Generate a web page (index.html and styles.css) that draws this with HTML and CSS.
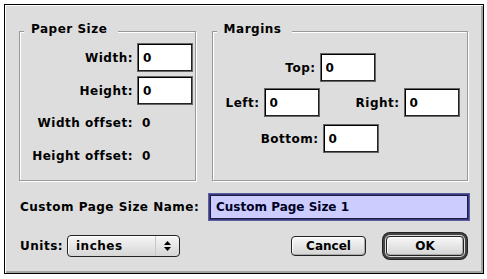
FILE: index.html
```html
<!DOCTYPE html>
<html lang="en">
    <head>
        <meta charset="UTF-8">
        <title>Page Setup</title>
        <link rel="stylesheet" href="styles.css">
    </head>
    <body>
        <div class="dialog">
            <div class="groups">
                <fieldset class="group paper">
                    <legend>Paper Size</legend>
                    <div class="paper-grid">
                        <label class="lbl">Width:</label>
                        <input class="field" type="text" value="0">
                        <label class="lbl">Height:</label>
                        <input class="field" type="text" value="0">
                        <span class="lbl">Width offset:</span>
                        <span class="value">0</span>
                        <span class="lbl">Height offset:</span>
                        <span class="value">0</span>
                    </div>
                </fieldset>
                <fieldset class="group margins">
                    <legend>Margins</legend>
                    <div class="mrow">
                        <label class="lbl top">Top:</label>
                        <input class="field" type="text" value="0">
                    </div>
                    <div class="mrow">
                        <label class="lbl left">Left:</label>
                        <input class="field" type="text" value="0">
                        <label class="lbl right">Right:</label>
                        <input class="field" type="text" value="0">
                    </div>
                    <div class="mrow">
                        <label class="lbl bottom">Bottom:</label>
                        <input class="field" type="text" value="0">
                    </div>
                </fieldset>
            </div>
            <div class="name-row">
                <label class="name-lbl">Custom Page Size Name:</label>
                <input class="name-field" type="text" value="Custom Page Size 1">
            </div>
            <div class="units-row">
                <label class="units-lbl">Units:</label>
                <div class="popup">
                    <span class="popup-text">inches</span>
                    <span class="arrows">
                        <svg width="7" height="10" viewBox="0 0 7 10">
                            <path d="M3.5 0 L7 4 L0 4 Z" fill="#000"/>
                            <path d="M0 6 L7 6 L3.5 10 Z" fill="#000"/>
                        </svg>
                    </span>
                </div>
                <div class="buttons">
                    <button class="btn cancel">Cancel</button>
                    <button class="btn ok">OK</button>
                </div>
            </div>
        </div>
    </body>
</html>
```
FILE: styles.css
```css
*{
    box-sizing: border-box;
}
body{
    margin: 0;
    background-color: #fff;
    font-family: "DejaVu Sans", sans-serif;
    font-weight: bold;
    font-size: 12px;
    letter-spacing: 0.5px;
    color: #000;
}
.dialog{
    margin: 4px 0 0 4px;
    width: 480px;
    height: 270px;
    padding: 17px 15px 0 14px;
    border: 1px solid #000;
    background-color: #dddddd;
    box-shadow: inset 1px 1px 0 #fff, inset -2px -2px 0 #a4a4a4;
}
.groups{
    display: flex;
    gap: 16px;
}
.group{
    margin: 0;
    padding: 0;
    min-width: 0;
    height: 159px;
    border: 1px solid #999;
    box-shadow: inset 1px 1px 0 #fff, 1px 1px 0 #fff;
}
.group legend{
    margin-left: 4px;
    padding: 0 11px 4px 7px;
    line-height: 14px;
    background-color: #dddddd;
}
.paper{
    width: 177px;
}
.margins{
    width: 257px;
}
.paper-grid{
    display: grid;
    grid-template-columns: 113px 56px;
    grid-template-rows: 29px 29px 28px 29px;
    column-gap: 4px;
    row-gap: 4px;
    align-items: center;
    padding-top: 3px;
}
.lbl{
    text-align: right;
    white-space: nowrap;
}
.value{
    padding-left: 5px;
}
.field{
    width: 56px;
    height: 29px;
    margin: 0;
    padding: 0 0 0 5px;
    font: inherit;
    color: #000;
    background-color: #fff;
    border: 1px solid #666;
    box-shadow: inset 1px 1px 0 #000, inset -1px -1px 0 #222;
    outline: none;
}
.mrow{
    display: flex;
    align-items: center;
    gap: 4px;
    margin-bottom: 6px;
}
.mrow:first-of-type{
    margin-top: 13px;
}
.mrow:last-of-type{
    margin-top: 7px;
}
.top{
    width: 103px;
}
.left{
    width: 47px;
}
.right{
    width: 76px;
}
.bottom{
    width: 106px;
}
.name-row{
    display: flex;
    align-items: center;
    height: 24px;
    margin-top: 14px;
}
.name-lbl{
    width: 191px;
    padding-left: 1px;
}
.name-field{
    width: 258px;
    height: 24px;
    margin: 0;
    padding: 0 0 0 5px;
    font: inherit;
    color: #000022;
    background-color: #ccccff;
    border: 1px solid #1c1c40;
    box-shadow: 0 0 0 1px #3a3a80, 0 0 0 2px #5c5ca0;
    outline: none;
}
.units-row{
    display: flex;
    align-items: center;
    height: 22px;
    margin-top: 16px;
}
.units-lbl{
    width: 48px;
    padding-left: 1px;
}
.popup{
    display: flex;
    align-items: center;
    width: 113px;
    height: 22px;
    border: 1px solid #222;
    border-radius: 4px;
    background: linear-gradient(#f6f6f6, #d6d6d6);
    box-shadow: inset 1px 1px 0 #fff;
}
.popup-text{
    flex: 1;
    padding-left: 8px;
}
.arrows{
    display: flex;
    align-items: center;
    justify-content: center;
    width: 24px;
    height: 100%;
    border-left: 1px solid #c8c8c8;
}
.buttons{
    display: flex;
    align-items: center;
    gap: 20px;
    margin-left: auto;
    margin-right: 4px;
}
.btn{
    height: 20px;
    margin: 0;
    padding: 0;
    font: inherit;
    color: #000;
    border: 1px solid #222;
    border-radius: 4px;
    background: linear-gradient(#f8f8f8, #d4d4d4);
    box-shadow: inset 1px 1px 0 #fff, inset -1px -1px 0 #aaa;
}
.cancel{
    width: 75px;
}
.ok{
    width: 78px;
    box-shadow: inset 1px 1px 0 #fff, inset -1px -1px 0 #aaa, 0 0 0 1px #ddd, 0 0 0 3px #444, 0 0 0 4px #222;
}
```
